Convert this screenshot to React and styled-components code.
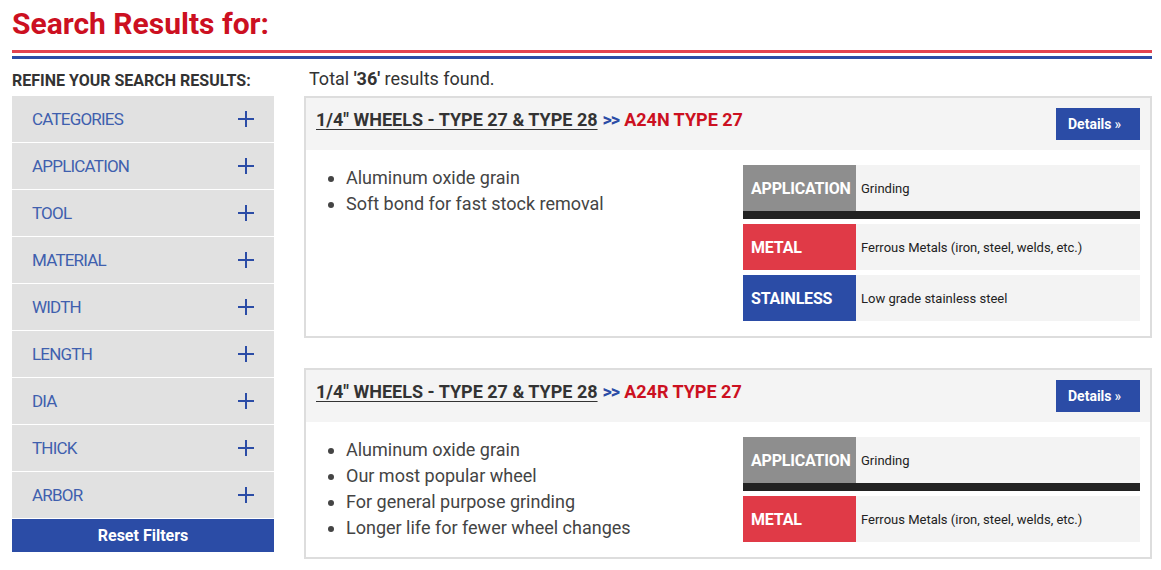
import React from 'react';
import styled, { createGlobalStyle } from 'styled-components';

const GlobalStyle = createGlobalStyle`
  * { box-sizing: border-box; }
  body {
    margin: 0;
    background: #fff;
    font-family: Roboto, "Liberation Sans", Arial, sans-serif;
    color: #333;
  }
`;

const Page = styled.div`
  width: 1152px;
  padding: 7px 0 0 12px;
`;

const Title = styled.h1`
  margin: 0;
  font-size: 30px;
  line-height: 34px;
  font-weight: 700;
  color: #cc1021;
`;

const Rule = styled.div`
  margin-top: 9px;
  height: 9px;
  border-top: 3px solid #e2434f;
  border-bottom: 3px solid #2b4ca6;
`;

const Columns = styled.div`
  display: flex;
  gap: 30px;
  margin-top: 10px;
`;

const Sidebar = styled.aside`
  width: 262px;
  flex-shrink: 0;
`;

const SidebarHeading = styled.div`
  padding: 3px 0 6px;
  font-size: 16px;
  line-height: 18px;
  font-weight: 700;
  color: #333;
`;

const FilterItem = styled.div`
  display: flex;
  align-items: center;
  justify-content: space-between;
  height: 47px;
  padding: 0 20px;
  background: #e1e1e1;
  border-bottom: 1px solid #fff;
  font-size: 17px;
  letter-spacing: -0.8px;
  color: #3f5fae;
  cursor: pointer;
`;

const PlusIcon = () => (
  <svg width="16" height="16" viewBox="0 0 16 16">
    <path d="M8 0v16M0 8h16" stroke="#2b4ca6" strokeWidth="2" />
  </svg>
);

const ResetButton = styled.button`
  display: block;
  width: 100%;
  height: 33px;
  border: 0;
  background: #2b4ca6;
  color: #fff;
  font-family: inherit;
  font-size: 16px;
  font-weight: 700;
  cursor: pointer;
`;

const Main = styled.main`
  width: 848px;
`;

const Total = styled.div`
  height: 27px;
  padding-left: 5px;
  font-size: 18px;
  line-height: 20px;
  color: #333;
  b { font-weight: 700; }
`;

const Card = styled.div`
  border: 2px solid #ddd;
  & + & { margin-top: 30px; }
`;

const CardHeader = styled.div`
  display: flex;
  justify-content: space-between;
  align-items: flex-start;
  padding: 10px;
  background: #f4f4f4;
`;

const CardTitle = styled.div`
  padding-top: 1px;
  font-size: 18px;
  line-height: 22px;
  font-weight: 700;
  text-transform: uppercase;
  a {
    color: #333;
    text-decoration: underline;
    text-decoration-thickness: 1px;
    text-underline-offset: 3px;
  }
`;

const Arrow = styled.span`
  color: #2b4ca6;
  margin: 0 5px;
  font-size: 18px;
  letter-spacing: -1px;
`;

const Model = styled.span`
  color: #cc1021;
`;

const DetailsButton = styled.button`
  width: 84px;
  height: 32px;
  padding: 0 12px;
  text-align: left;
  border: 0;
  background: #2b4ca6;
  color: #fff;
  font-family: inherit;
  font-size: 14px;
  font-weight: 700;
  cursor: pointer;
  span { font-weight: 400; margin-left: 3px; }
`;

const CardBody = styled.div`
  display: flex;
  align-items: flex-start;
  padding: 15px 10px;
`;

const Features = styled.ul`
  flex: 1;
  margin: 0;
  padding-left: 30px;
  font-size: 18px;
  line-height: 26px;
  color: #444;
`;

const Specs = styled.div`
  width: 397px;
  flex-shrink: 0;
`;

const SpecRow = styled.div`
  display: flex;
  height: ${p => (p.$bar ? 54 : 46)}px;
  background: #f3f3f3;
  border-bottom: ${p => (p.$bar ? '8px solid #222' : '0')};
  & + & { margin-top: 5px; }
`;

const SpecLabel = styled.div`
  display: flex;
  align-items: center;
  width: 113px;
  padding-left: 8px;
  background: ${p => p.$color};
  color: #fff;
  font-size: 16px;
  font-weight: 700;
  letter-spacing: -0.2px;
`;

const SpecValue = styled.div`
  display: flex;
  align-items: center;
  padding-left: 5px;
  font-size: 13px;
  color: #222;
`;

const labelColors = {
  APPLICATION: '#8e8e8e',
  METAL: '#e03a47',
  STAINLESS: '#2b4ca6',
};

const filters = ['CATEGORIES', 'APPLICATION', 'TOOL', 'MATERIAL', 'WIDTH', 'LENGTH', 'DIA', 'THICK', 'ARBOR'];

const results = [
  {
    model: 'A24N TYPE 27',
    features: ['Aluminum oxide grain', 'Soft bond for fast stock removal'],
    specs: [
      ['APPLICATION', 'Grinding'],
      ['METAL', 'Ferrous Metals (iron, steel, welds, etc.)'],
      ['STAINLESS', 'Low grade stainless steel'],
    ],
  },
  {
    model: 'A24R TYPE 27',
    features: [
      'Aluminum oxide grain',
      'Our most popular wheel',
      'For general purpose grinding',
      'Longer life for fewer wheel changes',
    ],
    specs: [
      ['APPLICATION', 'Grinding'],
      ['METAL', 'Ferrous Metals (iron, steel, welds, etc.)'],
    ],
  },
];

const App = () => (
  <>
    <GlobalStyle />
    <Page>
      <Title>Search Results for:</Title>
      <Rule />
      <Columns>
        <Sidebar>
          <SidebarHeading>REFINE YOUR SEARCH RESULTS:</SidebarHeading>
          {filters.map(f => (
            <FilterItem key={f}>
              {f}
              <PlusIcon />
            </FilterItem>
          ))}
          <ResetButton>Reset Filters</ResetButton>
        </Sidebar>
        <Main>
          <Total>
            Total <b>'36'</b> results found.
          </Total>
          {results.map(r => (
            <Card key={r.model}>
              <CardHeader>
                <CardTitle>
                  <a>1/4" Wheels - Type 27 &amp; Type 28</a>
                  <Arrow>&gt;&gt;</Arrow>
                  <Model>{r.model}</Model>
                </CardTitle>
                <DetailsButton>
                  Details<span>»</span>
                </DetailsButton>
              </CardHeader>
              <CardBody>
                <Features>
                  {r.features.map(f => (
                    <li key={f}>{f}</li>
                  ))}
                </Features>
                <Specs>
                  {r.specs.map(([label, value]) => (
                    <SpecRow key={label} $bar={label === 'APPLICATION'}>
                      <SpecLabel $color={labelColors[label]}>{label}</SpecLabel>
                      <SpecValue>{value}</SpecValue>
                    </SpecRow>
                  ))}
                </Specs>
              </CardBody>
            </Card>
          ))}
        </Main>
      </Columns>
    </Page>
  </>
);

export default App;
